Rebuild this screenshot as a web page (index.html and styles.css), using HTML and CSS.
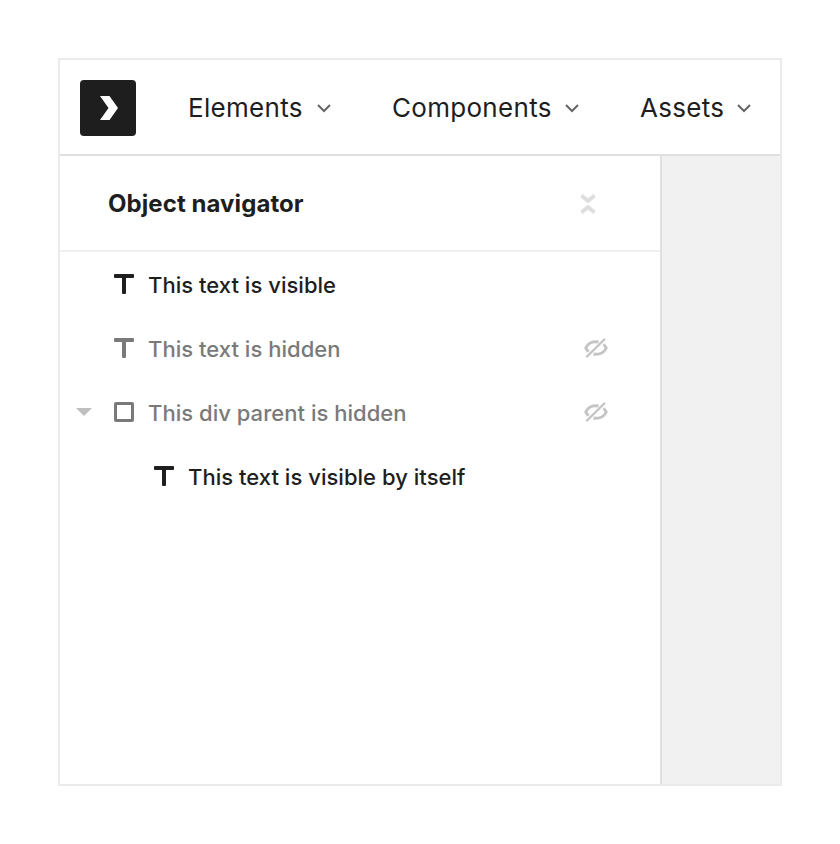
FILE: index.html
```html
<!DOCTYPE html>
<html lang="en">
<head>
<meta charset="utf-8">
<title>Object navigator</title>
<link rel="stylesheet" href="styles.css">
</head>
<body>
<div class="app">
  <header class="topbar">
    <div class="logo"><svg width="56" height="56" viewBox="0 0 56 56"><path d="M20 16h9.500l8.500 12-8.500 12H20l8.500-12z" fill="#fff"/></svg></div>
    <nav class="menu">
      <a class="menu-item elements">Elements<svg class="chevron" width="16" height="10" viewBox="0 0 16 10"><path d="M2 2l6 6 6-6"/></svg></a>
      <a class="menu-item components">Components<svg class="chevron" width="16" height="10" viewBox="0 0 16 10"><path d="M2 2l6 6 6-6"/></svg></a>
      <a class="menu-item assets">Assets<svg class="chevron" width="16" height="10" viewBox="0 0 16 10"><path d="M2 2l6 6 6-6"/></svg></a>
    </nav>
  </header>
  <div class="body">
    <aside class="panel">
      <div class="panel-head">
        <h1>Object navigator</h1>
        <svg class="collapse" width="16" height="22" viewBox="0 0 16 22"><path d="M1.500 2.500L8 8l6.500-5.500M1.500 19.500L8 14l6.500 5.500"/></svg>
      </div>
      <ul class="tree">
        <li class="row"><span class="toggle"></span><svg class="type" width="20" height="20" viewBox="0 0 20 20"><path d="M1 0h18q1 0 1 1v2q0 1-1 1h-7v15q0 1-1 1H9q-1 0-1-1V4H1q-1 0-1-1V1q0-1 1-1z"/></svg><span class="label">This text is visible</span></li>
        <li class="row hidden"><span class="toggle"></span><svg class="type" width="20" height="20" viewBox="0 0 20 20"><path d="M1 0h18q1 0 1 1v2q0 1-1 1h-7v15q0 1-1 1H9q-1 0-1-1V4H1q-1 0-1-1V1q0-1 1-1z"/></svg><span class="label">This text is hidden</span><svg class="eye" width="24" height="20" viewBox="0 0 24 20"><path class="lid" d="M14.500 4C8 3 3.500 6 1.800 10c.6 1.500 1.500 2.600 2.900 3.600M19.300 6.400c1.400 1 2.300 2.100 2.900 3.600-1.700 4-6.200 7-12.700 6"/><path class="slash" d="M20.300 1.500L3 18.500"/></svg></li>
        <li class="row hidden"><span class="toggle"><svg width="16" height="8" viewBox="0 0 16 8"><path d="M0 0h16L8 8z"/></svg></span><svg class="type" width="20" height="20" viewBox="0 0 20 20"><rect class="box" x="1.500" y="1.500" width="17" height="17" rx=".5"/></svg><span class="label">This div parent is hidden</span><svg class="eye" width="24" height="20" viewBox="0 0 24 20"><path class="lid" d="M14.500 4C8 3 3.500 6 1.800 10c.6 1.500 1.500 2.600 2.900 3.600M19.300 6.400c1.400 1 2.300 2.100 2.900 3.600-1.700 4-6.200 7-12.700 6"/><path class="slash" d="M20.300 1.500L3 18.500"/></svg></li>
        <li class="row child"><span class="toggle"></span><svg class="type" width="20" height="20" viewBox="0 0 20 20"><path d="M1 0h18q1 0 1 1v2q0 1-1 1h-7v15q0 1-1 1H9q-1 0-1-1V4H1q-1 0-1-1V1q0-1 1-1z"/></svg><span class="label">This text is visible by itself</span></li>
      </ul>
    </aside>
    <main class="canvas"></main>
  </div>
</div>
</body>
</html>
```
FILE: styles.css
```css
* { box-sizing: border-box; }
body { margin: 0; padding: 58px; background: #fff; color: #1e1e1e; font-family: Inter, sans-serif; }
.app { width: 724px; height: 728px; border: 2px solid #ebebeb; display: flex; flex-direction: column; }
.topbar { height: 96px; flex: none; display: flex; align-items: center; padding: 2px 0 0 20px; border-bottom: 2px solid #e0e0e0; }
.logo { width: 56px; height: 56px; border-radius: 4px; background: #1e1e1e; }
.menu { display: flex; margin-left: 52px; font-size: 26px; letter-spacing: .3px; }
.menu-item { display: flex; align-items: center; justify-content: space-between; line-height: 32px; white-space: nowrap; }
.elements { width: 144px; margin-right: 60px; }
.components { width: 188px; margin-right: 60px; }
.assets { width: 112px; }
.chevron { fill: none; stroke: #666; stroke-width: 2; }
.body { flex: 1; display: flex; }
.panel { width: 602px; border-right: 2px solid #e0e0e0; }
.panel-head { height: 96px; border-bottom: 2px solid #f0f0f0; display: flex; align-items: center; justify-content: space-between; padding: 2px 64px 0 48px; }
h1 { margin: 0; font-size: 24px; font-weight: 700; line-height: 30px; letter-spacing: .07px; }
.collapse { fill: none; stroke: #dedede; stroke-width: 4; stroke-linejoin: round; }
.tree { list-style: none; margin: 0; padding: 0; }
.row { height: 64px; display: flex; align-items: center; padding: 0 52px 0 16px; font-size: 22px; font-weight: 500; letter-spacing: .03px; }
.toggle { width: 38px; display: flex; fill: #bfbfbf; }
.type { fill: #1e1e1e; margin-right: 14px; }
.label { padding-top: 2px; }
.hidden .label { color: #7a7a7a; }
.hidden .type { fill: #7a7a7a; }
.type .box { fill: none; stroke: #7a7a7a; stroke-width: 3; }
.eye { margin-left: auto; fill: none; stroke: #c4c4c4; }
.eye .lid { stroke-width: 3; }
.eye .slash { stroke-width: 2.400; stroke-linecap: round; }
.child { padding-left: 56px; }
.canvas { flex: 1; background: #f1f1f1; }
```
